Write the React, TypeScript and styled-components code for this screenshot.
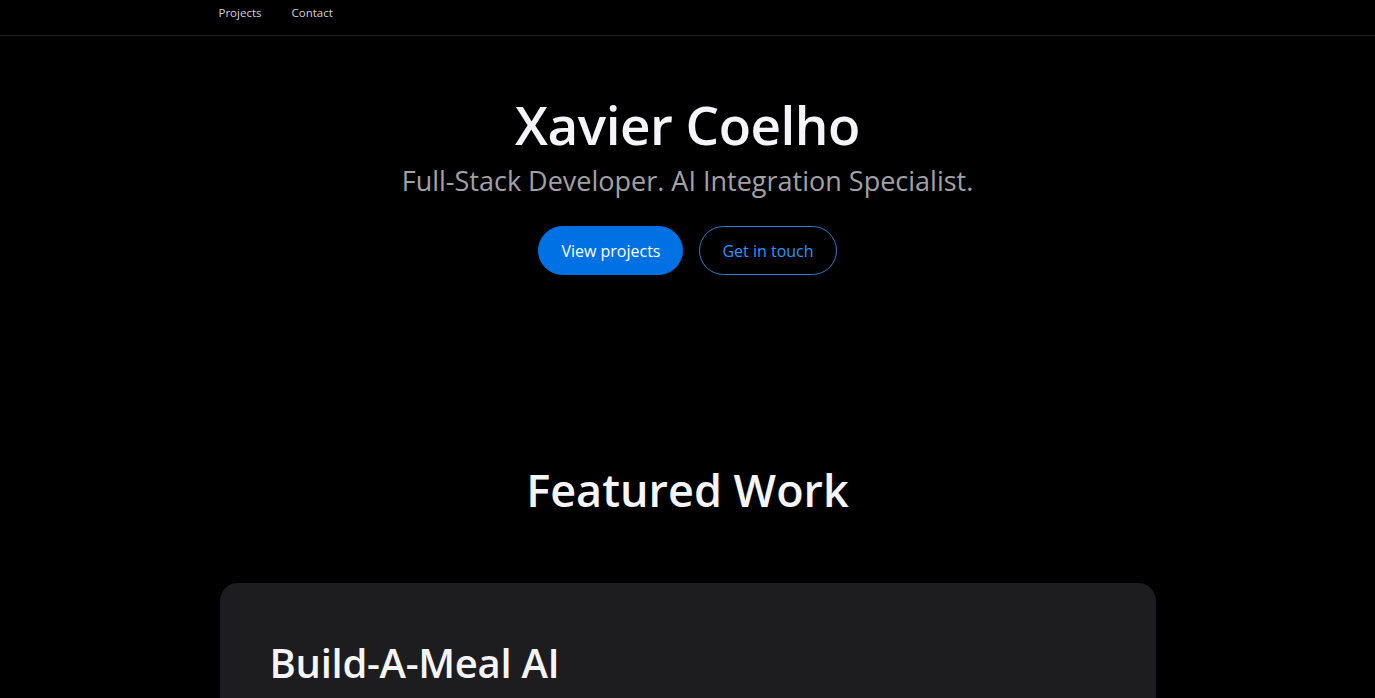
import styled, { createGlobalStyle } from "styled-components";

const GlobalStyle = createGlobalStyle`
  * { box-sizing: border-box; }
  body {
    margin: 0;
    background: #000;
    color: #f5f5f7;
    font-family: "Open Sans", "Noto Sans", "Liberation Sans", sans-serif;
  }
`;

const Nav = styled.nav`
  height: 36px;
  border-bottom: 1px solid #232325;
`;

const NavInner = styled.div`
  max-width: 980px;
  margin: 0 auto;
  padding: 0 22px 0 21px;
  display: flex;
  align-items: center;
  gap: 30px;
  height: 25px;
`;

const NavLink = styled.a`
  font-size: 11.5px;
  color: #d2d2d7;
  text-decoration: none;
`;

const Hero = styled.header`
  display: flex;
  flex-direction: column;
  align-items: center;
  padding-top: 60px;
`;

const Title = styled.h1`
  margin: 0;
  font-size: 53px;
  font-weight: 600;
  line-height: 1.1;
  letter-spacing: -0.5px;
`;

const Subtitle = styled.p`
  margin: 9px 0 0;
  font-size: 27px;
  font-weight: 400;
  color: #a1a1a6;
  line-height: 1.3;
`;

const Actions = styled.div`
  display: flex;
  gap: 16px;
  margin-top: 28px;
`;

const Button = styled.a<{ $primary?: boolean }>`
  height: 49px;
  padding: 0 22px;
  border-radius: 999px;
  display: inline-flex;
  align-items: center;
  font-size: 16px;
  text-decoration: none;
  ${({ $primary }) =>
    $primary
      ? `background: #0071e3; color: #fff; border: 1px solid #0071e3; font-weight: 500;`
      : `background: transparent; color: #2997ff; border: 1px solid #2b7fd4;`}
`;

const Section = styled.section`
  max-width: 980px;
  margin: 0 auto;
  padding: 188px 22px 0;
`;

const SectionTitle = styled.h2`
  margin: 0;
  text-align: center;
  font-size: 45px;
  font-weight: 600;
  line-height: 1.2;
`;

const Card = styled.article`
  margin-top: 66px;
  background: #1d1d1f;
  border-radius: 18px;
  padding: 56px 50px 60px;
  min-height: 300px;
`;

const CardTitle = styled.h3`
  margin: 0;
  font-size: 40px;
  font-weight: 600;
  line-height: 1.2;
  letter-spacing: -0.3px;
`;

export default function App() {
  return (
    <>
      <GlobalStyle />
      <Nav>
        <NavInner>
          <NavLink href="#projects">Projects</NavLink>
          <NavLink href="#contact">Contact</NavLink>
        </NavInner>
      </Nav>
      <Hero>
        <Title>Xavier Coelho</Title>
        <Subtitle>Full-Stack Developer. AI Integration Specialist.</Subtitle>
        <Actions>
          <Button $primary href="#projects">View projects</Button>
          <Button href="#contact">Get in touch</Button>
        </Actions>
      </Hero>
      <Section id="projects">
        <SectionTitle>Featured Work</SectionTitle>
        <Card>
          <CardTitle>Build-A-Meal AI</CardTitle>
        </Card>
      </Section>
    </>
  );
}
